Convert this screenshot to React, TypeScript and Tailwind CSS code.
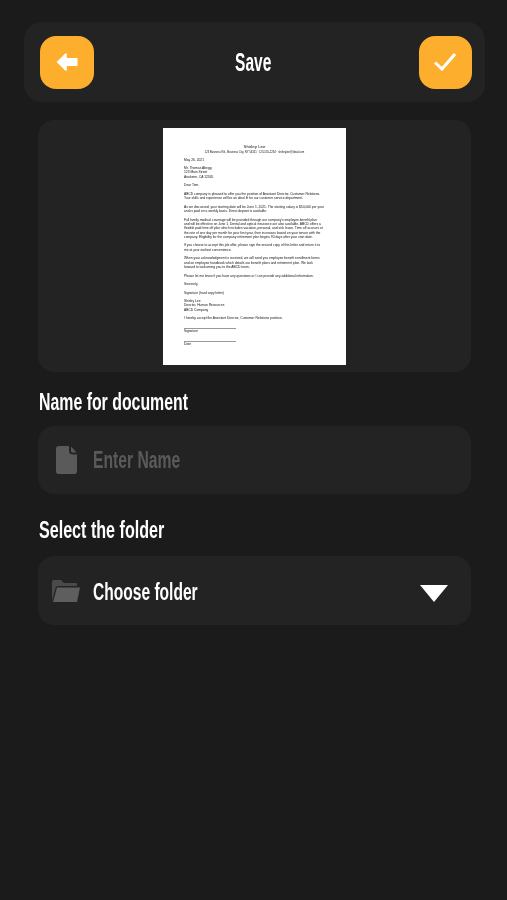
const sans = "font-['Liberation_Sans',sans-serif]";

function Line({ children, className = "" }: { children: React.ReactNode; className?: string }) {
  return <p className={"whitespace-nowrap text-[3.3px] leading-[4.35px] " + className}>{children}</p>;
}

function Paper() {
  return (
    <div className="w-[183px] h-[237px] bg-white pl-[21px] pr-[10px] pt-[16px] text-[#111] blur-[0.3px] overflow-hidden">
      <p className="text-center text-[4.4px] leading-[5px] pr-[11px]">Shirley Lee</p>
      <p className="mt-[1.5px] text-center text-[2.7px] leading-[4px] whitespace-nowrap pr-[11px]">123 Business Rd., Business City, NY 54321 · 123-555-1234 · shirley.lee@ideal.com</p>
      <Line className="mt-[3px]">May 26, 2021</Line>
      <div className="mt-[4.2px]">
        <Line>Mr. Thomas Abegg</Line>
        <Line>123 Main Street</Line>
        <Line>Anaheim, CA 12345</Line>
      </div>
      <Line className="mt-[4.2px]">Dear Tom,</Line>
      <div className="mt-[4.2px]">
        <Line>ABCD company is pleased to offer you the position of Assistant Director, Customer Relations.</Line>
        <Line>Your skills and experience will be an ideal fit for our customer service department.</Line>
      </div>
      <div className="mt-[4.2px]">
        <Line>As we discussed, your starting date will be June 1, 2021. The starting salary is $50,000 per year</Line>
        <Line>and is paid on a weekly basis. Direct deposit is available.</Line>
      </div>
      <div className="mt-[4.2px]">
        <Line>Full family medical coverage will be provided through our company's employee benefit plan</Line>
        <Line>and will be effective on June 1. Dental and optical insurance are also available. ABCD offers a</Line>
        <Line>flexible paid time off plan which includes vacation, personal, and sick leave. Time off accrues at</Line>
        <Line>the rate of one day per month for your first year, then increases based on your tenure with the</Line>
        <Line>company. Eligibility for the company retirement plan begins 90 days after your start date.</Line>
      </div>
      <div className="mt-[4.2px]">
        <Line>If you choose to accept this job offer, please sign the second copy of this letter and return it to</Line>
        <Line>me at your earliest convenience.</Line>
      </div>
      <div className="mt-[4.2px]">
        <Line>When your acknowledgment is received, we will send you employee benefit enrollment forms</Line>
        <Line>and an employee handbook which details our benefit plans and retirement plan. We look</Line>
        <Line>forward to welcoming you to the ABCD team.</Line>
      </div>
      <Line className="mt-[4.2px]">Please let me know if you have any questions or I can provide any additional information.</Line>
      <Line className="mt-[4.2px]">Sincerely,</Line>
      <Line className="mt-[4.2px]">Signature (hard copy letter)</Line>
      <div className="mt-[4.2px]">
        <Line>Shirley Lee</Line>
        <Line>Director, Human Resources</Line>
        <Line>ABCD Company</Line>
      </div>
      <Line className="mt-[4.2px]">I hereby accept the Assistant Director, Customer Relations position.</Line>
      <div className="h-[8px] w-[52px] border-b border-[#999]" />
      <Line>Signature</Line>
      <div className="h-[8.5px] w-[52px] border-b border-[#999]" />
      <Line>Date</Line>
    </div>
  );
}

export default function App() {
  return (
    <div className={"w-[507px] h-[900px] bg-[#1b1b1b] flex flex-col overflow-hidden " + sans}>
      <header className="mt-[22px] ml-[24px] w-[461px] h-[80px] rounded-[18px] bg-[#232323] flex items-center justify-between pl-[16px] pr-[13px]">
        <button className="w-[54px] h-[53px] rounded-[16px] bg-[#feae2d] flex items-center justify-center">
          <svg width="22" height="18" viewBox="0 0 22 18">
            <path d="M0.6 9 L9.2 0.6 Q10.8 -0.4 10.8 1.6 V5 H21.5 V13 H10.8 V16.4 Q10.8 18.4 9.2 17.4 Z" fill="#fff" />
          </svg>
        </button>
        <h1 className="mr-[6px] text-white text-[25px] font-bold leading-none scale-x-[0.62]">Save</h1>
        <button className="w-[53px] h-[53px] rounded-[16px] bg-[#feae2d] flex items-center justify-center">
          <svg width="22" height="18" viewBox="0 0 22 18" fill="none">
            <path d="M1 9.5 L8 16 L21 1" stroke="#fff" strokeWidth="3" />
          </svg>
        </button>
      </header>

      <section className="mt-[18px] ml-[38px] w-[433px] h-[252px] rounded-[16px] bg-[#232323] flex justify-center pt-[8px]">
        <Paper />
      </section>

      <label className="mt-[17px] ml-[39px] text-white text-[23px] font-bold leading-[26px] origin-left scale-x-[0.69]">Name for document</label>
      <div className="mt-[11px] ml-[38px] w-[433px] h-[68px] rounded-[16px] bg-[#232323] flex items-center pl-[18px]">
        <svg width="21" height="28" viewBox="0 0 21 30" preserveAspectRatio="none" className="shrink-0">
          <path d="M3 0 H13 V5 Q13 9 17 9 H21 V27 Q21 30 18 30 H3 Q0 30 0 27 V3 Q0 0 3 0 Z M15 0.5 L20.5 7 H17 Q15 7 15 5 Z" fill="#5a5a5a" />
        </svg>
        <span className="ml-[16px] text-[#5a5a5a] text-[24px] font-bold leading-none origin-left scale-x-[0.654]">Enter Name</span>
      </div>

      <label className="mt-[23px] ml-[39px] text-white text-[23px] font-bold leading-[26px] origin-left scale-x-[0.70]">Select the folder</label>
      <div className="mt-[13px] ml-[38px] w-[433px] h-[69px] rounded-[16px] bg-[#232323] flex items-center pl-[14px] pr-[23px]">
        <svg width="28" height="22" viewBox="0 0 28 22" className="shrink-0">
          <path d="M0 21 V2 Q0 0 2 0 H9 L12 3 H24 Q25 3 25 4 V6 H6 Q4 6 3.5 8 Z" fill="#4a4a4a" />
          <path d="M5 7.5 H28 L25 22 H1 Z" fill="#5e5e5e" />
        </svg>
        <span className="ml-[13px] mt-[3px] text-white text-[23px] font-bold leading-none origin-left scale-x-[0.677]">Choose folder</span>
        <svg width="28" height="17" viewBox="0 0 28 17" className="ml-auto mt-[6px]">
          <path d="M0 0 H28 L14 17 Z" fill="#fff" />
        </svg>
      </div>
    </div>
  );
}
